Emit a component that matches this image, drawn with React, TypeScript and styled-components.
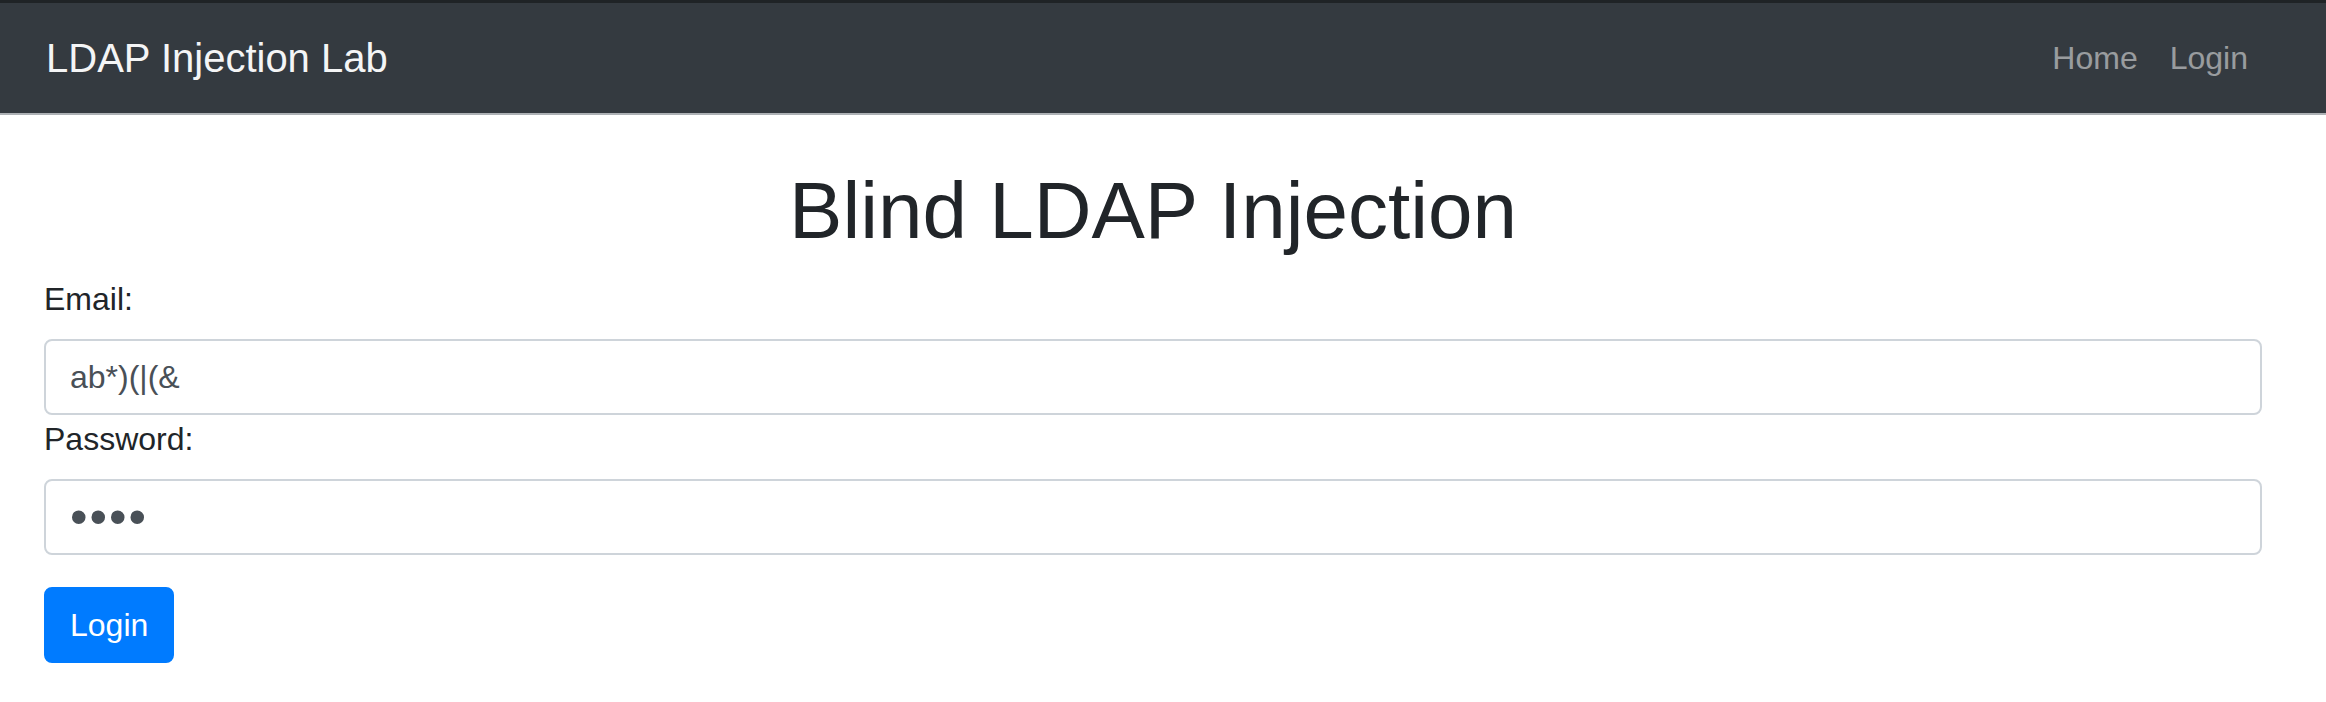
import React from 'react'
import styled, { createGlobalStyle } from 'styled-components'

const GlobalStyle = createGlobalStyle`
  html, body {
    margin: 0;
    padding: 0;
    background: #fff;
  }
  body {
    font-family: 'Liberation Sans', Arial, sans-serif;
    color: #212529;
  }
  * {
    box-sizing: border-box;
  }
`

const Navbar = styled.nav`
  display: flex;
  align-items: center;
  justify-content: space-between;
  height: 115px;
  padding: 0 62px 0 46px;
  background: #343a40;
  border-top: 3px solid #1f2326;
  border-bottom: 2px solid #adb1b5;
`

const Brand = styled.a`
  font-size: 40px;
  line-height: 60px;
  color: #f4f5f6;
  text-decoration: none;
`

const NavList = styled.ul`
  display: flex;
  margin: 0;
  padding: 0;
  list-style: none;
`

const NavLink = styled.a`
  display: block;
  padding: 0 16px;
  font-size: 32px;
  line-height: 48px;
  color: rgba(255, 255, 255, 0.5);
  text-decoration: none;
`

const Container = styled.main`
  padding: 0 64px 0 44px;
`

const Title = styled.h1`
  margin: 48px 0 16px;
  font-size: 80px;
  font-weight: 500;
  line-height: 1.2;
  text-align: center;
  color: #212529;
`

const Label = styled.label`
  display: block;
  margin-bottom: 16px;
  font-size: 32px;
  line-height: 48px;
  color: #212529;
`

// password bullets are drawn bigger than the plain text, as in the shot
const Input = styled.input<{ $secret?: boolean }>`
  display: block;
  width: 100%;
  height: 76px;
  padding: 12px 24px;
  font-family: inherit;
  font-size: ${p => (p.$secret ? '50px' : '32px')};
  letter-spacing: ${p => (p.$secret ? '2px' : 'normal')};
  line-height: 48px;
  color: #495057;
  background: #fff;
  border: 2px solid #ced4da;
  border-radius: 8px;
  outline: none;
`

const Button = styled.button`
  margin-top: 32px;
  padding: 12px 24px;
  font-family: inherit;
  font-size: 32px;
  line-height: 48px;
  color: #fff;
  background: #007bff;
  border: 2px solid #007bff;
  border-radius: 8px;
  cursor: pointer;
`

export default function App() {
  return (
    <>
      <GlobalStyle />
      <Navbar>
        <Brand href='#'>LDAP Injection Lab</Brand>
        <NavList>
          <li>
            <NavLink href='#'>Home</NavLink>
          </li>
          <li>
            <NavLink href='#'>Login</NavLink>
          </li>
        </NavList>
      </Navbar>
      <Container>
        <Title>Blind LDAP Injection</Title>
        <form onSubmit={e => e.preventDefault()}>
          <Label htmlFor='email'>Email:</Label>
          <Input id='email' type='text' defaultValue='ab*)(|(&' />
          <Label htmlFor='password'>Password:</Label>
          <Input id='password' type='password' defaultValue='pass' $secret />
          <Button type='submit'>Login</Button>
        </form>
      </Container>
    </>
  )
}
